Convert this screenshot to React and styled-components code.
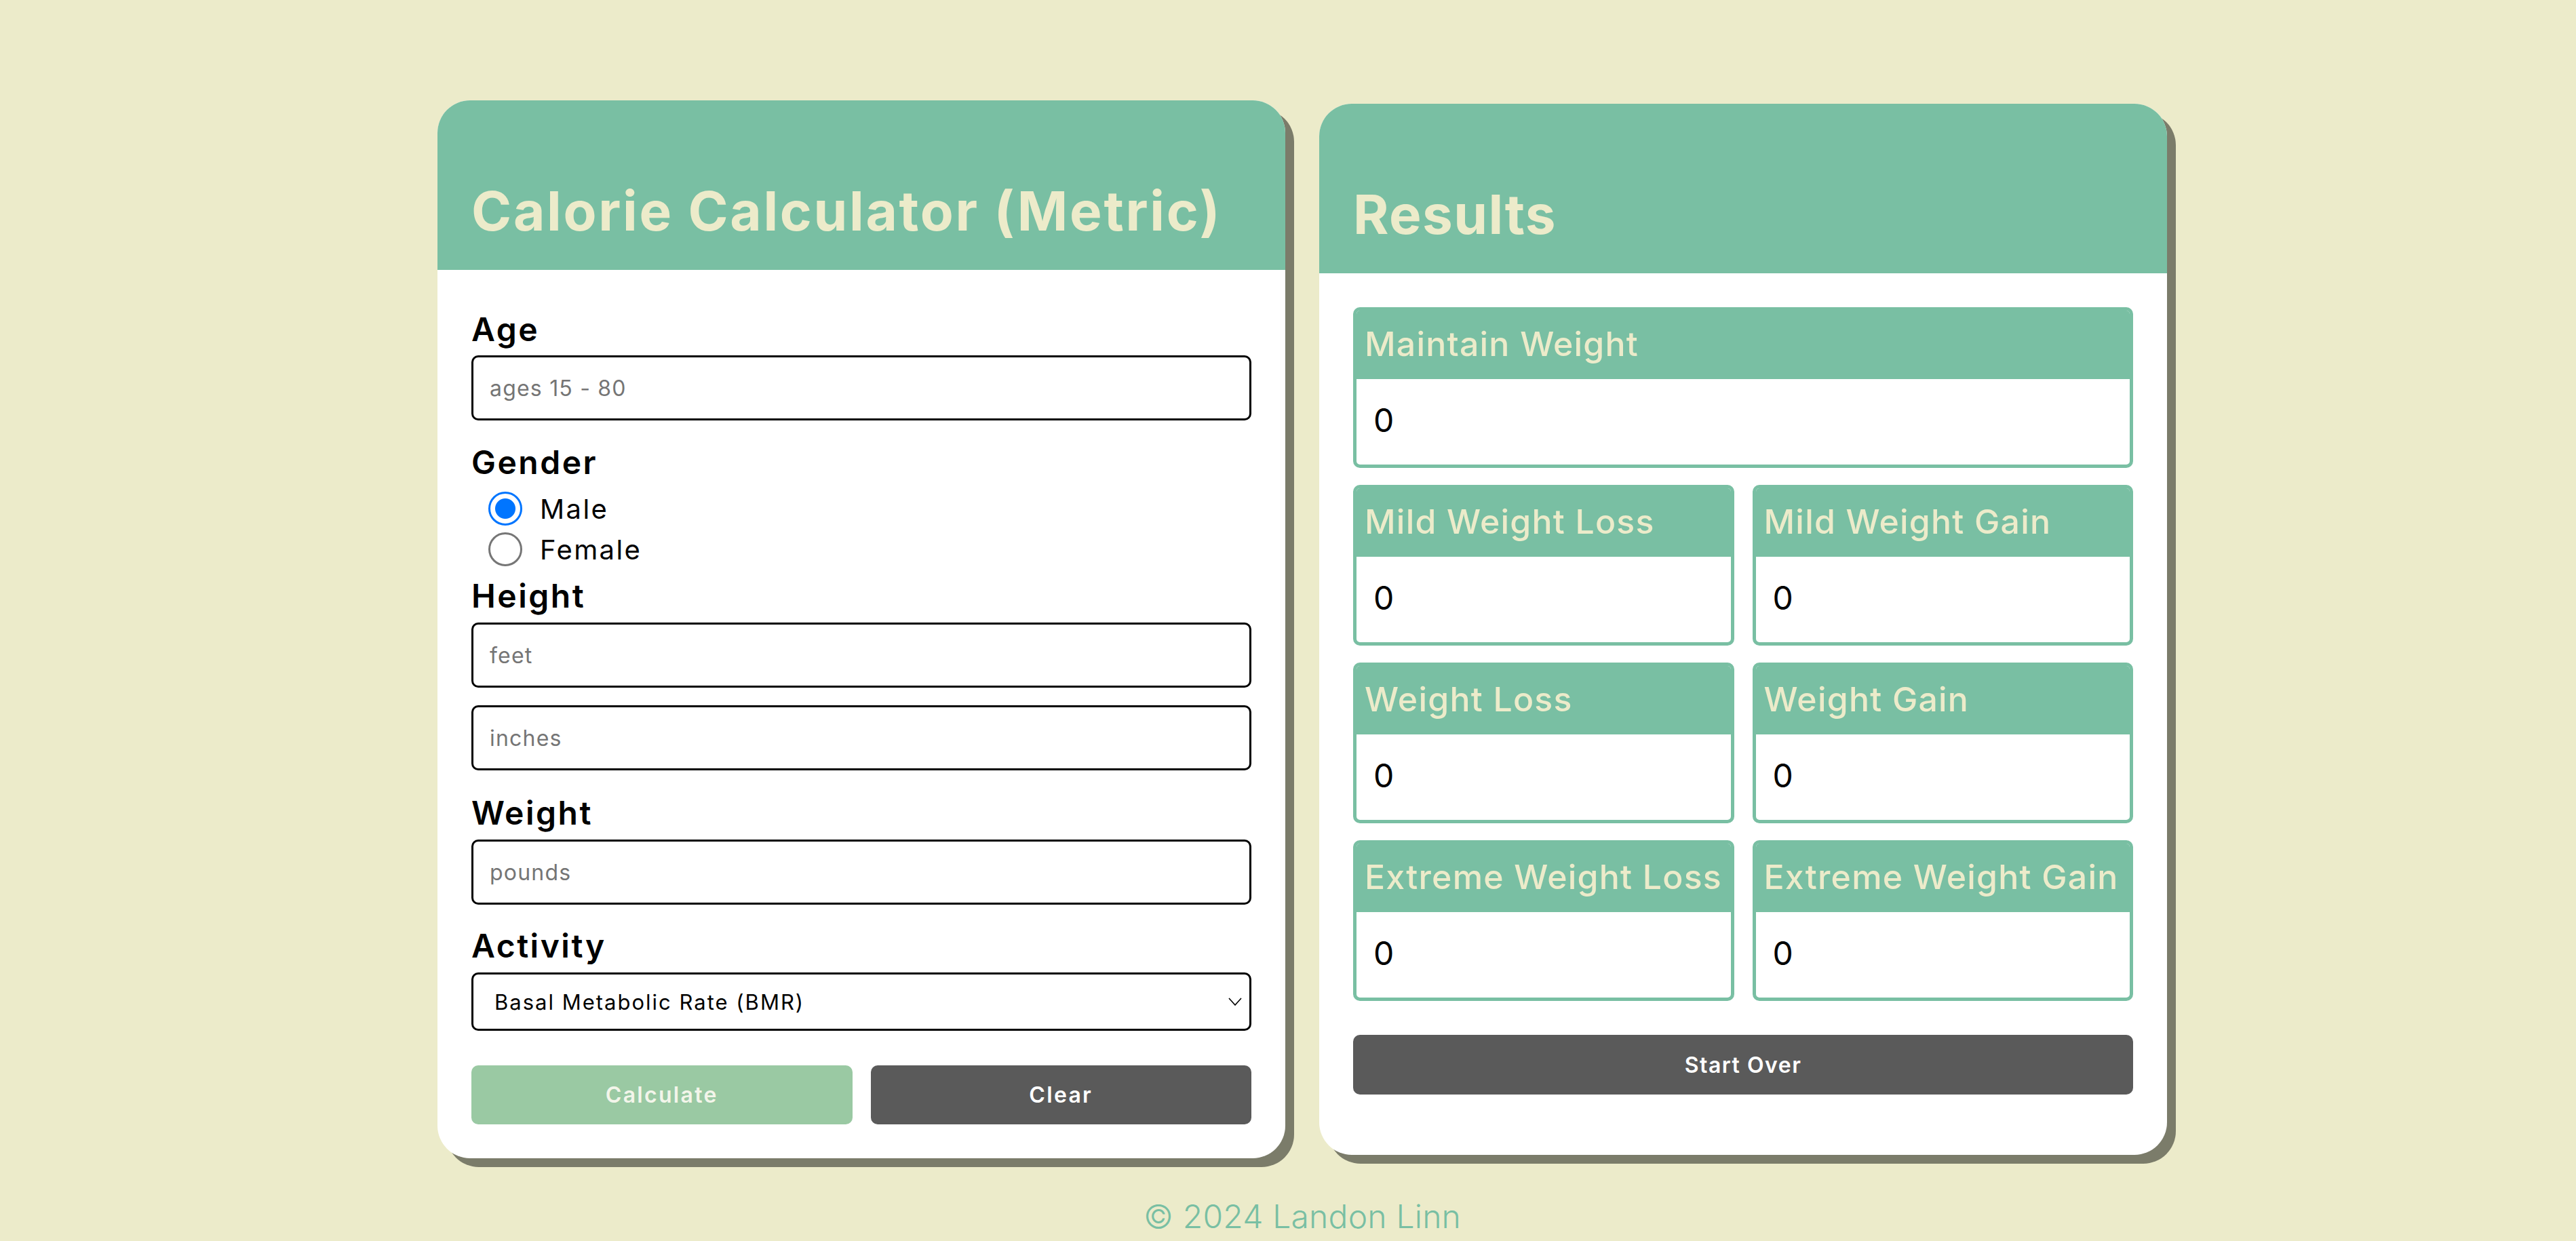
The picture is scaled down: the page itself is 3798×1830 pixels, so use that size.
import React from "react";
import styled, { createGlobalStyle } from "styled-components";

const GREEN = "#79bfa3";
const CREAM = "#ecebca";
const SHADOW = "#7b7c6a";
const FONT = `Inter, "Noto Sans", "DejaVu Sans", sans-serif`;

const Global = createGlobalStyle`
  html, body { margin: 0; padding: 0; background: ${CREAM}; }
  body { font-family: ${FONT}; }
  * { box-sizing: border-box; }
`;

const Page = styled.div`
  min-height: 1830px;
  padding: 148px 0 0 42px;
  display: flex;
  flex-direction: column;
  align-items: center;
`;

const Cards = styled.div`
  display: flex;
  align-items: center;
  gap: 50px;
`;

const Card = styled.section`
  width: 1250px;
  background: #fff;
  border-radius: 48px;
  overflow: hidden;
  box-shadow: 13px 13px 0 ${SHADOW};
  display: flex;
  flex-direction: column;
`;

const CardHeader = styled.header`
  height: 250px;
  background: ${GREEN};
  padding: 123px 50px 0;
`;

const Title = styled.h1`
  margin: 0;
  font-family: ${FONT};
  font-weight: 700;
  font-size: 80px;
  line-height: 80px;
  color: ${CREAM};
  letter-spacing: ${(p) => p.$ls || "2.7px"};
  white-space: nowrap;
`;

const CardBody = styled.div`
  padding: ${(p) => p.$pad};
  display: flex;
  flex-direction: column;
`;

const Label = styled.label`
  display: block;
  font-family: ${FONT};
  font-weight: 600;
  font-size: 48px;
  line-height: 58px;
  letter-spacing: 2.5px;
  color: #000;
  margin-top: ${(p) => p.$mt || 0}px;
`;

const TextInput = styled.input`
  display: block;
  width: 100%;
  height: 96px;
  margin-top: ${(p) => p.$mt || 0}px;
  border: 3px solid #000;
  border-radius: 10px;
  padding: 0 24px;
  font-family: ${FONT};
  font-size: 32px;
  letter-spacing: 1.2px;
  color: #000;
  background: #fff;
  outline: none;
  &::placeholder { color: #757575; }
`;

const RadioGroup = styled.div`
  margin-top: 9px;
  display: flex;
  flex-direction: column;
`;

const RadioRow = styled.label`
  height: 60px;
  display: flex;
  align-items: center;
  padding-left: 25px;
  gap: 26px;
  font-family: ${FONT};
  font-size: 40px;
  letter-spacing: 2.4px;
  color: #000;
`;

const Radio = styled.input`
  appearance: none;
  -webkit-appearance: none;
  margin: 0;
  width: 50px;
  height: 50px;
  border-radius: 50%;
  border: 3px solid #767676;
  background: #fff;
  flex: none;
  &:checked {
    border-color: #0075ff;
    background: radial-gradient(circle, #0075ff 0 14.5px, #fff 15.5px);
  }
`;

const SelectWrap = styled.div`
  position: relative;
  margin-top: 10px;
`;

const Select = styled.select`
  appearance: none;
  -webkit-appearance: none;
  display: block;
  width: 100%;
  height: 86px;
  border: 3px solid #000;
  border-radius: 10px;
  padding: 0 60px 0 31px;
  font-family: ${FONT};
  font-size: 31px;
  letter-spacing: 2px;
  color: #000;
  background: #fff;
  outline: none;
`;

const Chevron = styled.svg`
  position: absolute;
  right: 13px;
  top: 50%;
  transform: translateY(-50%);
  pointer-events: none;
`;

const ButtonRow = styled.div`
  margin-top: ${(p) => p.$mt}px;
  display: grid;
  grid-template-columns: ${(p) => (p.$single ? "1fr" : "1fr 1fr")};
  gap: 27px;
`;

const Button = styled.button`
  height: ${(p) => p.$h || 87}px;
  border: none;
  border-radius: 10px;
  background: ${(p) => (p.$variant === "green" ? "#9ac9a3" : "#5a5a5a")};
  color: ${(p) => (p.$variant === "green" ? "#f3f5ea" : "#fff")};
  font-family: ${FONT};
  font-weight: 600;
  font-size: 32px;
  letter-spacing: ${(p) => p.$ls || "2.3px"};
  cursor: pointer;
`;

const ResultGrid = styled.div`
  display: grid;
  grid-template-columns: 1fr 1fr;
  column-gap: 27px;
  row-gap: 25px;
`;

const ResultBox = styled.div`
  grid-column: ${(p) => (p.$wide ? "1 / -1" : "auto")};
  height: 237px;
  border: 5px solid ${GREEN};
  border-radius: 10px;
  overflow: hidden;
  display: flex;
  flex-direction: column;
  background: #fff;
`;

const ResultHead = styled.div`
  height: 101px;
  background: ${GREEN};
  padding-left: 12px;
  font-family: ${FONT};
  font-weight: 500;
  font-size: 50px;
  line-height: 98px;
  letter-spacing: 1.2px;
  color: ${CREAM};
  white-space: nowrap;
`;

const ResultValue = styled.div`
  flex: 1;
  padding-left: 25px;
  font-family: ${FONT};
  font-weight: 400;
  font-size: 48px;
  line-height: 122px;
  color: #000;
`;

const Footer = styled.footer`
  margin-top: 57px;
  font-family: ${FONT};
  font-weight: 300;
  font-size: 48px;
  line-height: 58px;
  letter-spacing: 0.2px;
  color: ${GREEN};
  text-align: center;
`;

const results = [
  { label: "Maintain Weight", wide: true },
  { label: "Mild Weight Loss" },
  { label: "Mild Weight Gain" },
  { label: "Weight Loss" },
  { label: "Weight Gain" },
  { label: "Extreme Weight Loss" },
  { label: "Extreme Weight Gain" },
];

export default function App() {
  return (
    <>
      <Global />
      <Page>
        <Cards>
          <Card>
            <CardHeader>
              <Title>Calorie Calculator (Metric)</Title>
            </CardHeader>
            <CardBody $pad="59px 50px 50px">
              <Label>Age</Label>
              <TextInput $mt={9} placeholder="ages 15 - 80" />
              <Label $mt={33}>Gender</Label>
              <RadioGroup>
                <RadioRow>
                  <Radio type="radio" name="gender" defaultChecked />
                  Male
                </RadioRow>
                <RadioRow>
                  <Radio type="radio" name="gender" />
                  Female
                </RadioRow>
              </RadioGroup>
              <Label $mt={10}>Height</Label>
              <TextInput $mt={10} placeholder="feet" />
              <TextInput $mt={26} placeholder="inches" />
              <Label $mt={34}>Weight</Label>
              <TextInput $mt={10} placeholder="pounds" />
              <Label $mt={32}>Activity</Label>
              <SelectWrap>
                <Select defaultValue="bmr">
                  <option value="bmr">Basal Metabolic Rate (BMR)</option>
                  <option value="sed">Sedentary</option>
                </Select>
                <Chevron width="22" height="14" viewBox="0 0 22 14">
                  <path d="M2 2 L11 12 L20 2" fill="none" stroke="#000" strokeWidth="1.6" />
                </Chevron>
              </SelectWrap>
              <ButtonRow $mt={51}>
                <Button $variant="green">Calculate</Button>
                <Button>Clear</Button>
              </ButtonRow>
            </CardBody>
          </Card>
          <Card>
            <CardHeader>
              <Title $ls="1.4px">Results</Title>
            </CardHeader>
            <CardBody $pad="50px 50px 89px">
              <ResultGrid>
                {results.map((r) => (
                  <ResultBox key={r.label} $wide={r.wide}>
                    <ResultHead>{r.label}</ResultHead>
                    <ResultValue>0</ResultValue>
                  </ResultBox>
                ))}
              </ResultGrid>
              <ButtonRow $mt={50} $single>
                <Button $h={88} $ls="1.5px">Start Over</Button>
              </ButtonRow>
            </CardBody>
          </Card>
        </Cards>
        <Footer>© 2024 Landon Linn</Footer>
      </Page>
    </>
  );
}
